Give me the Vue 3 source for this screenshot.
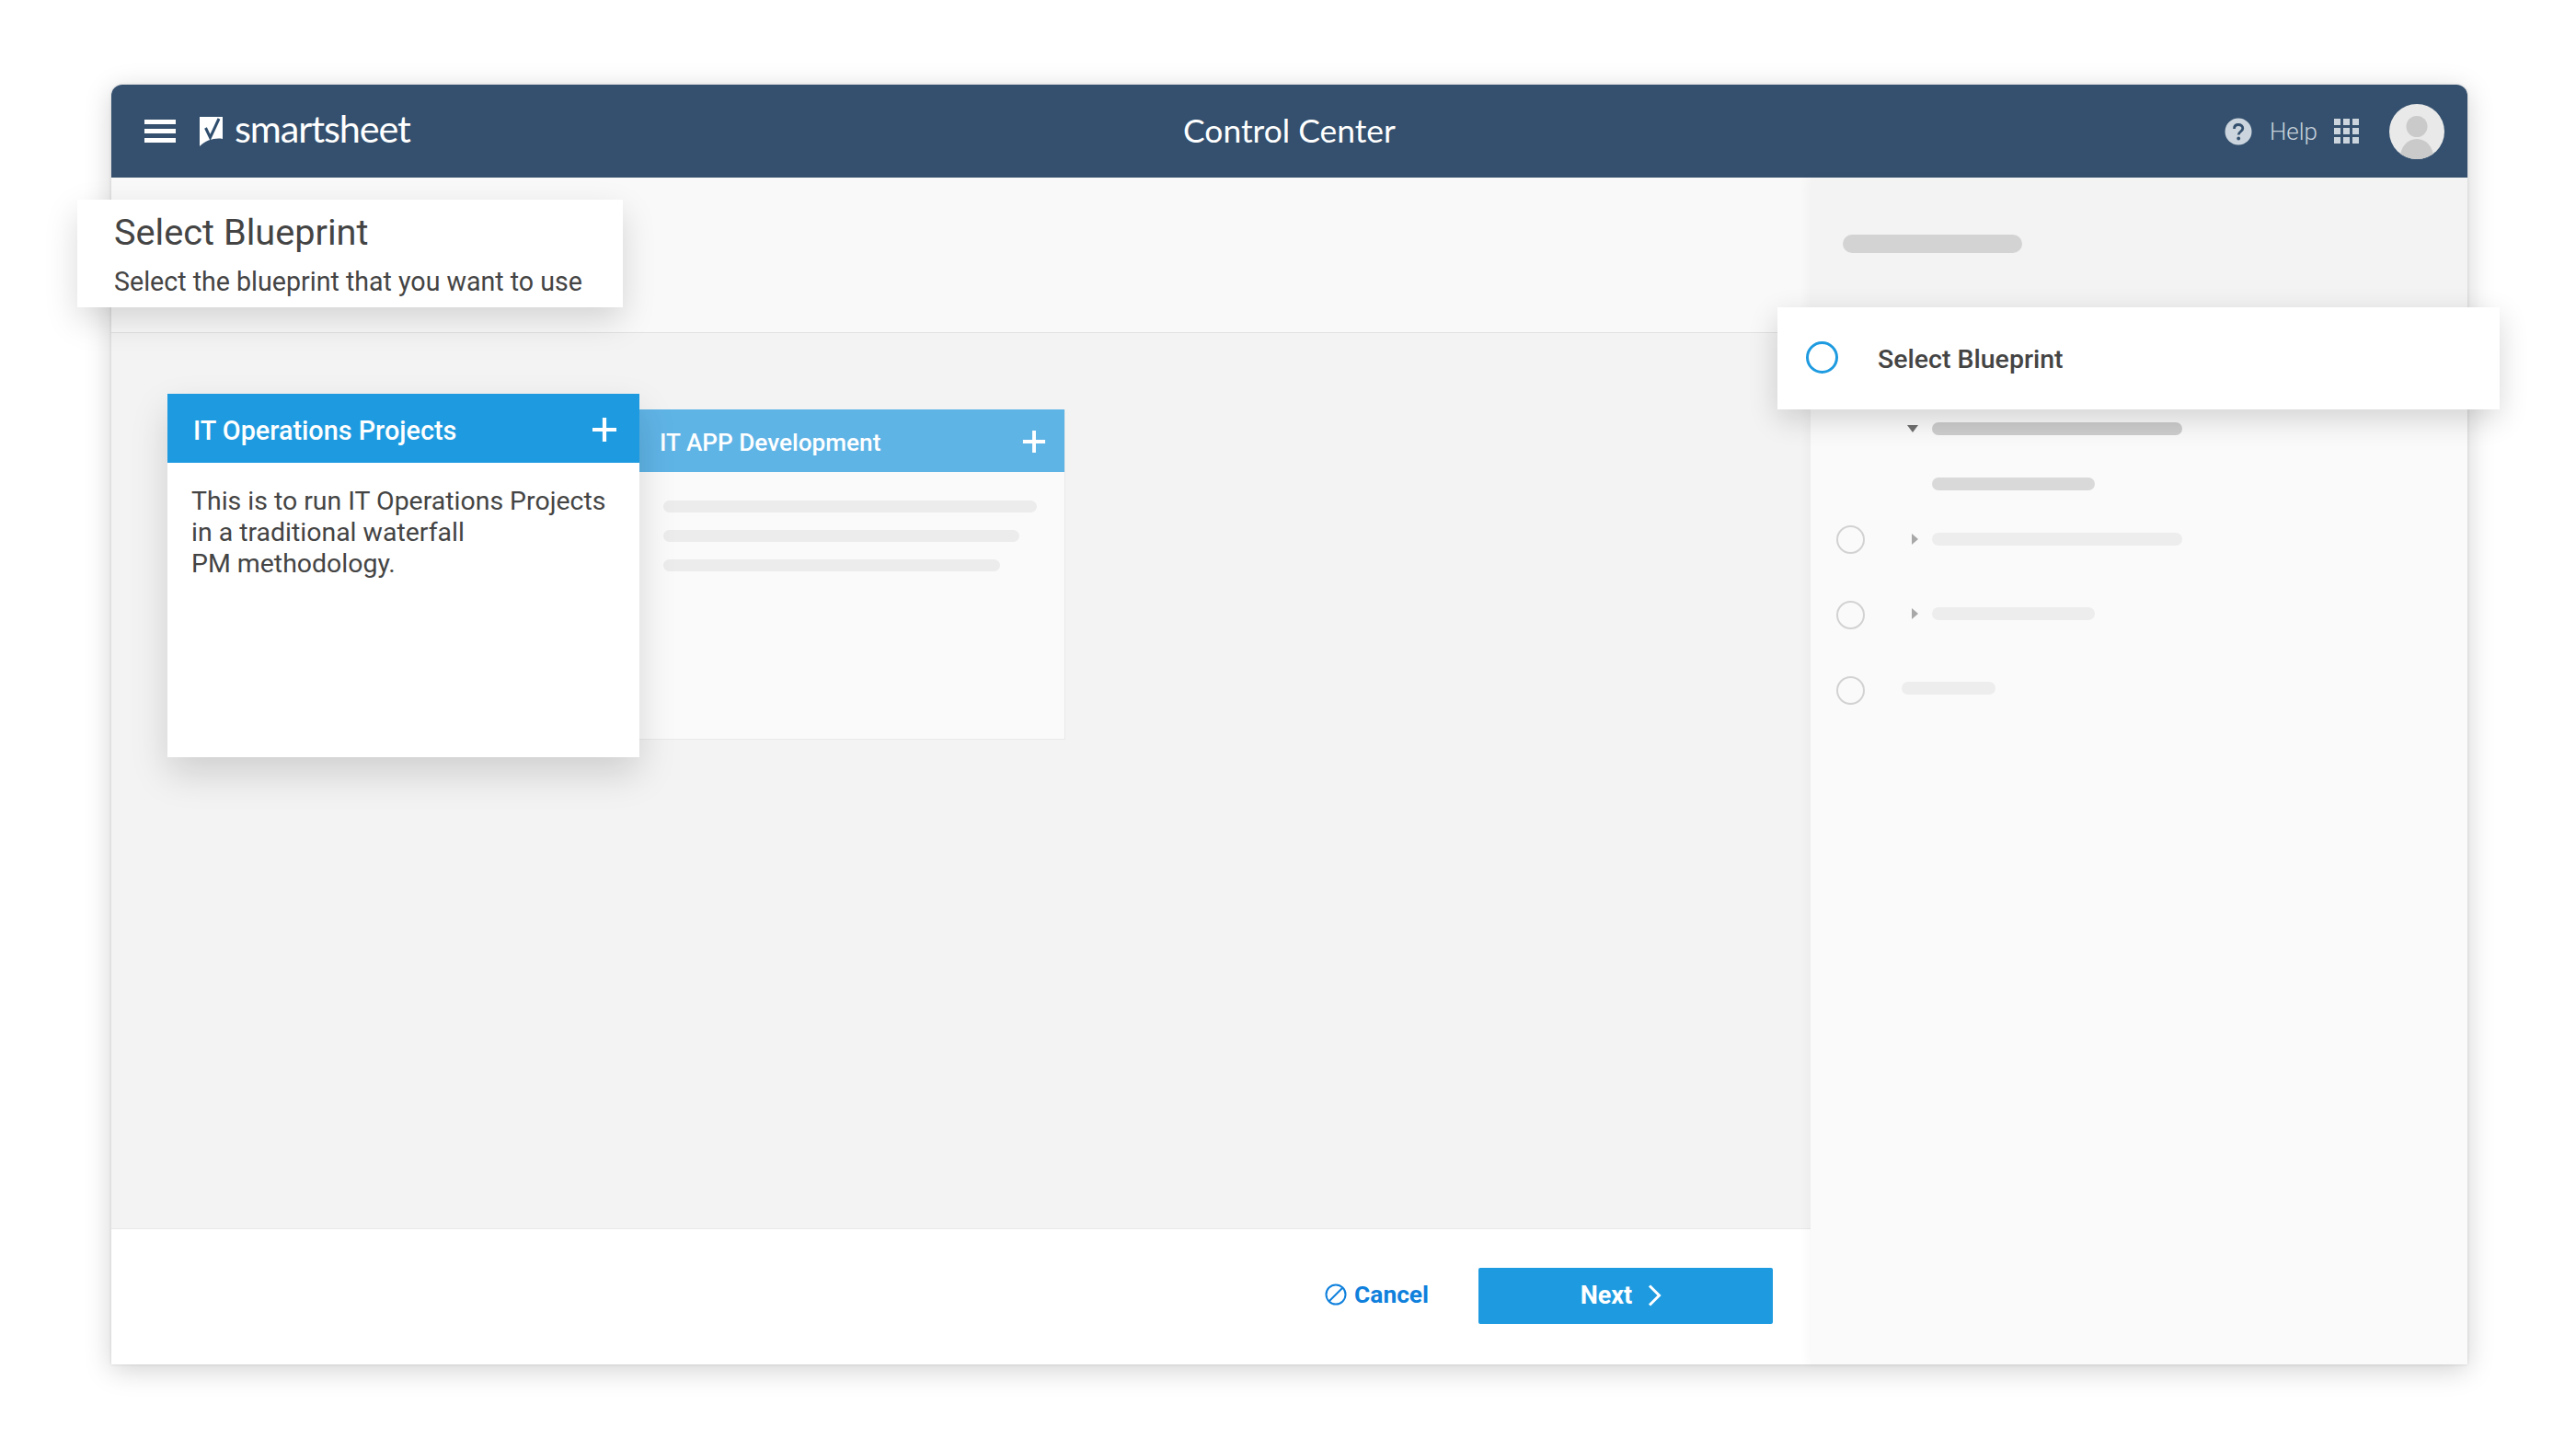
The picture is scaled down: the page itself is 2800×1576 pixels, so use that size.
<script setup>
const lines = ['l1', 'l2', 'l3']
const rows = [
  { id: 1, bar: 'long dark', arrow: 'down', radio: false, cls: 'r1' },
  { id: 2, bar: 'short mid', arrow: '', radio: false, cls: 'r2' },
  { id: 3, bar: 'long pale', arrow: 'right', radio: true, cls: 'r3' },
  { id: 4, bar: 'short pale', arrow: 'right', radio: true, cls: 'r4' },
  { id: 5, bar: 'tiny pale', arrow: 'none', radio: true, cls: 'r5' }
]
</script>

<template>
  <div class="page">
    <div class="window">
      <header class="topbar">
        <div class="brand">
          <button class="burger" aria-label="Menu"><i></i><i></i><i></i></button>
          <svg class="logo" viewBox="0 0 25 32" aria-hidden="true">
            <path d="M0 0H25V24C17 22.500 7 25 0 32Z" fill="#fff" />
            <path d="M6.500 12L11.500 22.500L21 2" fill="none" stroke="#2f4e6e" stroke-width="3" />
          </svg>
          <span class="wordmark">smartsheet</span>
        </div>
        <h1 class="app-title">Control Center</h1>
        <div class="tools">
          <svg class="help-icon" viewBox="0 0 30 30" aria-hidden="true">
            <circle cx="15" cy="15" r="14.500" fill="#ccd5dd" />
            <path d="M10.500 12C10.500 9 12.500 7.500 15 7.500C17.800 7.500 19.800 9.200 19.800 11.500C19.800 15 15.200 15 15.200 18.500" fill="none" stroke="#34506e" stroke-width="2.800" />
            <circle cx="15.200" cy="22.500" r="1.900" fill="#34506e" />
          </svg>
          <span class="help">Help</span>
          <div class="apps"><i v-for="n in 9" :key="n"></i></div>
          <svg class="avatar" viewBox="0 0 60 60" aria-hidden="true">
            <defs><clipPath id="av"><circle cx="30" cy="30" r="30" /></clipPath></defs>
            <g clip-path="url(#av)">
              <rect width="60" height="60" fill="#e9e9e9" />
              <circle cx="30" cy="24.500" r="11.500" fill="#cacaca" />
              <ellipse cx="30" cy="58" rx="18" ry="20" fill="#cacaca" />
            </g>
          </svg>
        </div>
      </header>

      <div class="body">
        <main class="main">
          <section class="intro"></section>
          <section class="cards">
            <article class="card active">
              <div class="card-head">
                <span>IT Operations Projects</span>
                <svg class="plus" viewBox="0 0 28 28" aria-hidden="true"><path d="M14 1V27M1 14H27" stroke="#fff" stroke-width="4.200" /></svg>
              </div>
              <p class="card-text">This is to run IT Operations Projects<br />in a traditional waterfall<br />PM methodology.</p>
            </article>
            <article class="card muted">
              <div class="card-head">
                <span>IT APP Development</span>
                <svg class="plus" viewBox="0 0 28 28" aria-hidden="true"><path d="M14 1V27M1 14H27" stroke="#fff" stroke-width="4.200" /></svg>
              </div>
              <div class="skeleton-lines">
                <div v-for="l in lines" :key="l" class="sk" :class="l"></div>
              </div>
            </article>
          </section>
          <footer class="foot">
            <a class="cancel">
              <svg viewBox="0 0 24 24" aria-hidden="true"><circle cx="12" cy="12" r="10.500" fill="none" stroke="#0f80dc" stroke-width="2" /><path d="M5 19L19 5" stroke="#0f80dc" stroke-width="2" /></svg>
              Cancel
            </a>
            <button class="next">
              Next
              <svg viewBox="0 0 15 24" aria-hidden="true"><path d="M2 1.500L12.500 12L2 22.500" fill="none" stroke="#fff" stroke-width="3" /></svg>
            </button>
          </footer>
          <div class="popup-left">
            <h2>Select Blueprint</h2>
            <p>Select the blueprint that you want to use</p>
          </div>
        </main>

        <aside class="side">
          <div class="side-top"><div class="side-title"></div></div>
          <div class="tree">
            <div v-for="r in rows" :key="r.id" class="row" :class="r.cls">
              <span class="radio" :class="{ hidden: !r.radio }"></span>
              <span class="arrow" :class="r.arrow"></span>
              <span class="bar" :class="r.bar"></span>
            </div>
          </div>
          <div class="popup-right">
            <span class="radio-on"></span>
            <strong>Select Blueprint</strong>
          </div>
        </aside>
      </div>
    </div>
  </div>
</template>

<style>
html, body { margin: 0; background: #fff; }
</style>

<style scoped>
.page {
  width: 2800px;
  height: 1576px;
  padding: 92px 0 0 121px;
  box-sizing: border-box;
  background: #fff;
  font-family: Roboto, "Liberation Sans", sans-serif;
  overflow: hidden;
}
.window {
  width: 2561px;
  height: 1391px;
  display: flex;
  flex-direction: column;
  border-radius: 12px 12px 0 0;
  box-shadow: 0 0 3px rgba(0, 0, 0, .14), 0 6px 30px rgba(0, 0, 0, .18);
}
.topbar {
  height: 101px;
  flex: none;
  background: #34506e;
  border-radius: 12px 12px 0 0;
  display: grid;
  grid-template-columns: 1fr auto 1fr;
  align-items: center;
}
.brand { display: flex; align-items: center; padding-left: 36px; }
.burger {
  width: 34px;
  height: 25px;
  padding: 0;
  border: 0;
  background: none;
  display: flex;
  flex-direction: column;
  justify-content: space-between;
  margin-right: 26px;
}
.burger i { display: block; height: 5px; background: #fff; }
.logo { width: 25px; height: 32px; margin-right: 13px; margin-top: 1px; overflow: visible; }
.wordmark {
  font-family: Lato, sans-serif;
  font-size: 41.4px;
  line-height: 44px;
  letter-spacing: -1.1px;
  color: #fff;
  margin-top: -7px;
}
.app-title {
  margin: -2px 0 0;
  font-family: Lato, sans-serif;
  font-weight: 400;
  font-size: 35.4px;
  color: #fff;
}
.tools { display: flex; align-items: center; justify-content: flex-end; padding-right: 25px; }
.help-icon { width: 30px; height: 30px; margin-right: 19px; margin-top: 1px; }
.help { font-size: 26px; font-weight: 300; color: #c6d1db; margin-right: 18px; }
.apps { display: grid; grid-template-columns: repeat(3, 7px); gap: 3px; margin-right: 33px; }
.apps i { display: block; width: 7px; height: 7px; background: #ccd5dd; }
.avatar { width: 60px; height: 60px; display: block; }

.body { flex: 1; display: flex; min-height: 0; }
.main {
  width: 1847px;
  flex: none;
  display: flex;
  flex-direction: column;
  position: relative;
  background: #f3f3f3;
}
.intro { height: 168px; flex: none; background: #f9f9f9; border-bottom: 1px solid #e2e2e2; }
.cards {
  flex: 1;
  display: flex;
  align-items: flex-start;
  padding: 66px 0 0 61px;
  background: #f3f3f3;
}
.card { display: flex; flex-direction: column; }
.card.active {
  width: 513px;
  height: 395px;
  background: #fff;
  box-shadow: 0 18px 38px rgba(0, 0, 0, .15);
  position: relative;
  z-index: 2;
}
.card.muted {
  width: 463px;
  height: 359px;
  margin-top: 17px;
  background: #fafafa;
  border-right: 1px solid #e9e9e9;
  border-bottom: 1px solid #e9e9e9;
  box-sizing: border-box;
}
.card-head {
  display: flex;
  align-items: center;
  justify-content: space-between;
  color: #fff;
  font-weight: 500;
}
.active .card-head { height: 75px; background: #1e9be0; padding: 5px 24px 0 28px; font-size: 28.8px; box-sizing: border-box; }
.muted .card-head { height: 68px; background: #5fb4e6; padding: 4px 20px 0 22px; font-size: 26.2px; box-sizing: border-box; }
.active .plus { width: 28px; height: 28px; margin-top: -3px; }
.muted .plus { width: 26px; height: 26px; margin-top: -2px; }
.card-text {
  margin: 25px 0 0 26px;
  font-size: 28.45px;
  line-height: 34px;
  color: #444;
}
.skeleton-lines { padding: 31px 0 0 26px; display: flex; flex-direction: column; gap: 19px; }
.sk { height: 13px; border-radius: 7px; background: #ececec; }
.l1 { width: 406px; }
.l2 { width: 387px; }
.l3 { width: 366px; }
.foot {
  height: 148px;
  flex: none;
  background: #fff;
  border-top: 1px solid #e8e8e8;
  box-sizing: border-box;
  display: flex;
  align-items: center;
  justify-content: flex-end;
  padding: 0 41px 3px 0;
}
.cancel {
  display: flex;
  align-items: center;
  gap: 8px;
  font-size: 26.3px;
  font-weight: 700;
  color: #0f80dc;
  margin-right: 54px;
  margin-top: -2px;
}
.cancel svg { width: 24px; height: 24px; }
.next {
  width: 320px;
  height: 61px;
  border: 0;
  border-radius: 2px;
  background: #1e9be0;
  color: #fff;
  font: 700 27px Roboto, sans-serif;
  display: flex;
  align-items: center;
  justify-content: center;
  gap: 17px;
  padding: 0 10px 0 0;
}
.next svg { width: 15px; height: 24px; }
.popup-left {
  position: absolute;
  left: -37px;
  top: 24px;
  width: 593px;
  height: 117px;
  box-sizing: border-box;
  padding: 13px 0 0 40px;
  background: #fff;
  box-shadow: 0 14px 34px rgba(0, 0, 0, .15);
}
.popup-left h2 { margin: 0; font-size: 39.7px; line-height: 46px; font-weight: 400; color: #444; }
.popup-left p { margin: 11px 0 0; font-size: 28.6px; line-height: 38px; font-weight: 400; color: #444; }

.side {
  flex: 1;
  position: relative;
  z-index: 2;
  background: #fafafa;
  display: flex;
  flex-direction: column;
  box-shadow: -4px 0 10px rgba(0, 0, 0, .03);
}
.side-top { height: 141px; flex: none; background: #f3f3f3; padding: 62px 0 0 35px; box-sizing: border-box; }
.side-title { width: 195px; height: 20px; border-radius: 10px; background: #d3d3d3; }
.tree { padding: 117px 0 0 28px; }
.row { height: 30px; display: flex; align-items: center; }
.r2, .r3 { margin-top: 30px; }
.r4, .r5 { margin-top: 51px; }
.r4 .radio { margin-top: 2px; }
.r5 .radio { margin-top: 4px; }
.radio { width: 31px; height: 31px; box-sizing: border-box; border: 2px solid #d2d2d2; border-radius: 50%; flex: none; }
.radio.hidden { visibility: hidden; }
.arrow { width: 73px; flex: none; display: flex; justify-content: flex-end; padding-right: 15px; box-sizing: border-box; }
.arrow.down::before {
  content: "";
  border-left: 6px solid transparent;
  border-right: 6px solid transparent;
  border-top: 8px solid #6f6f6f;
}
.arrow.right::before {
  content: "";
  border-top: 6px solid transparent;
  border-bottom: 6px solid transparent;
  border-left: 7px solid #a8a8a8;
}
.arrow.none { width: 40px; padding: 0; }
.bar { height: 14px; border-radius: 7px; }
.long { width: 272px; }
.short { width: 177px; }
.tiny { width: 102px; }
.dark { background: #cdcdcd; }
.mid { background: #d9d9d9; }
.pale { background: #ededed; }
.popup-right {
  position: absolute;
  left: -36px;
  top: 141px;
  width: 785px;
  height: 111px;
  box-sizing: border-box;
  background: #fff;
  box-shadow: 0 10px 30px rgba(0, 0, 0, .16);
  display: flex;
  align-items: center;
  padding-left: 31px;
}
.radio-on { width: 35px; height: 35px; box-sizing: border-box; border: 3px solid #1e9be0; border-radius: 50%; margin-right: 43px; margin-top: -3px; }
.popup-right strong { font-size: 28.5px; font-weight: 500; color: #444; margin-top: 2px; }
</style>
